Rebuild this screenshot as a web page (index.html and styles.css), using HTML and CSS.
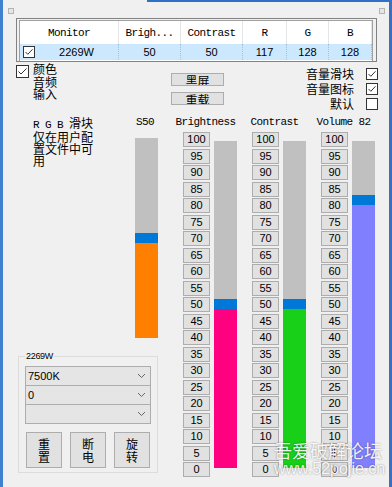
FILE: index.html
```html
<!DOCTYPE html>
<html lang="zh">

<head>
    <meta charset="UTF-8">
    <title>Monitor</title>
    <link rel="stylesheet" href="styles.css">
</head>

<body>
    <div class="window">
        <div class="topbar"></div>
        <div class="corners"><span class="grip"></span><span class="grip"></span></div>

        <div class="listframe">
            <div class="list">
                <div class="list-head">
                    <div>Monitor</div>
                    <div>Brigh...</div>
                    <div>Contrast</div>
                    <div>R</div>
                    <div>G</div>
                    <div>B</div>
                </div>
                <div class="list-row">
                    <div class="cell-name">
                        <svg class="chk" width="12" height="12" viewBox="0 0 12 12"><rect x=".5" y=".5" width="11" height="11" fill="#fff" stroke="#333"/><path d="M2.5 6 L4.8 8.3 L9.5 3.3" fill="none" stroke="#333"/></svg>
                        <span>2269W</span>
                    </div>
                    <div>50</div>
                    <div>50</div>
                    <div>117</div>
                    <div>128</div>
                    <div>128</div>
                </div>
            </div>
        </div>

        <div class="options">
            <div class="opt-left">
                <svg class="chk-big" width="13" height="13" viewBox="0 0 13 13"><rect x=".5" y=".5" width="12" height="12" fill="#fff" stroke="#333"/><path d="M2.5 6.5 L5 9 L10.5 3.5" fill="none" stroke="#333"/></svg>
                <div class="opt-labels">
                    <div>颜色</div>
                    <div>音频</div>
                    <div>输入</div>
                </div>
            </div>
            <div class="opt-mid">
                <button class="small-btn">黑屏</button>
                <button class="small-btn">重载</button>
            </div>
            <div class="opt-right">
                <div class="opt-row"><span>音量滑块</span><svg width="12" height="12" viewBox="0 0 12 12"><rect x=".5" y=".5" width="11" height="11" fill="#fff" stroke="#333"/><path d="M2.5 6 L4.8 8.3 L9.5 3.3" fill="none" stroke="#333"/></svg></div>
                <div class="opt-row"><span>音量图标</span><svg width="12" height="12" viewBox="0 0 12 12"><rect x=".5" y=".5" width="11" height="11" fill="#fff" stroke="#333"/><path d="M2.5 6 L4.8 8.3 L9.5 3.3" fill="none" stroke="#333"/></svg></div>
                <div class="opt-row"><span>默认</span><svg width="12" height="12" viewBox="0 0 12 12"><rect x=".5" y=".5" width="11" height="11" fill="#fff" stroke="#333"/></svg></div>
            </div>
        </div>

        <div class="main">
            <div class="left">
                <div class="left-top">
                    <div class="note"><span class="rgb">R G B </span>滑块<br>仅在用户配置文件中可用</div>
                    <div class="s50">
                        <div class="col-label">S50</div>
                        <div class="bar s50-bar">
                            <div class="rest"></div>
                            <div class="thumb"></div>
                            <div class="fill orange" style="height:95px"></div>
                        </div>
                    </div>
                </div>

                <fieldset class="group">
                    <legend>2269W</legend>
                    <div class="combo"><span>7500K</span><svg width="7" height="4" viewBox="0 0 7 4"><path d="M0 0 L3.5 3.5 L7 0" fill="none" stroke="#666"/></svg></div>
                    <div class="combo"><span>0</span><svg width="7" height="4" viewBox="0 0 7 4"><path d="M0 0 L3.5 3.5 L7 0" fill="none" stroke="#666"/></svg></div>
                    <div class="combo"><span></span><svg width="7" height="4" viewBox="0 0 7 4"><path d="M0 0 L3.5 3.5 L7 0" fill="none" stroke="#666"/></svg></div>
                    <div class="actions">
                        <button class="act">重<br>置</button>
                        <button class="act">断<br>电</button>
                        <button class="act">旋<br>转</button>
                    </div>
                </fieldset>
            </div>

            <div class="slider-col">
                <div class="col-label">Brightness</div>
                <div class="slider">
                    <div class="ticks">
                        <div class="tick">100</div><div class="tick">95</div><div class="tick">90</div>
                        <div class="tick">85</div><div class="tick">80</div><div class="tick">75</div>
                        <div class="tick">70</div><div class="tick">65</div><div class="tick">60</div>
                        <div class="tick">55</div><div class="tick">50</div><div class="tick">45</div>
                        <div class="tick">40</div><div class="tick">35</div><div class="tick">30</div>
                        <div class="tick">25</div><div class="tick">20</div><div class="tick">15</div>
                        <div class="tick">10</div><div class="tick">5</div><div class="tick">0</div>
                    </div>
                    <div class="bar">
                        <div class="rest"></div>
                        <div class="thumb"></div>
                        <div class="fill pink" style="height:159px"></div>
                    </div>
                </div>
            </div>

            <div class="slider-col">
                <div class="col-label">Contrast</div>
                <div class="slider">
                    <div class="ticks">
                        <div class="tick">100</div><div class="tick">95</div><div class="tick">90</div>
                        <div class="tick">85</div><div class="tick">80</div><div class="tick">75</div>
                        <div class="tick">70</div><div class="tick">65</div><div class="tick">60</div>
                        <div class="tick">55</div><div class="tick">50</div><div class="tick">45</div>
                        <div class="tick">40</div><div class="tick">35</div><div class="tick">30</div>
                        <div class="tick">25</div><div class="tick">20</div><div class="tick">15</div>
                        <div class="tick">10</div><div class="tick">5</div><div class="tick">0</div>
                    </div>
                    <div class="bar">
                        <div class="rest"></div>
                        <div class="thumb"></div>
                        <div class="fill green" style="height:159px"></div>
                    </div>
                </div>
            </div>

            <div class="slider-col">
                <div class="col-label">Volume 82</div>
                <div class="slider">
                    <div class="ticks">
                        <div class="tick">100</div><div class="tick">95</div><div class="tick">90</div>
                        <div class="tick">85</div><div class="tick">80</div><div class="tick">75</div>
                        <div class="tick">70</div><div class="tick">65</div><div class="tick">60</div>
                        <div class="tick">55</div><div class="tick">50</div><div class="tick">45</div>
                        <div class="tick">40</div><div class="tick">35</div><div class="tick">30</div>
                        <div class="tick">25</div><div class="tick">20</div><div class="tick">15</div>
                        <div class="tick">10</div><div class="tick">5</div><div class="tick">0</div>
                    </div>
                    <div class="bar">
                        <div class="rest"></div>
                        <div class="thumb"></div>
                        <div class="fill purple" style="height:263px"></div>
                    </div>
                </div>
            </div>
        </div>

        <!-- forum watermark over the bottom right corner -->
        <div class="watermark">
            <div class="wm-cn">吾爱破解论坛</div>
            <div class="wm-url">www.52pojie.cn</div>
        </div>
    </div>
</body>

</html>
```

FILE: styles.css
```css
* {
    margin: 0;
    padding: 0;
    box-sizing: border-box;
}

body {
    background: #f0f0f0;
    font-family: "Noto Sans CJK SC", sans-serif;
    color: #000;
}

.window {
    position: relative;
    width: 392px;
    height: 487px;
    overflow: hidden;
    background: #f0f0f0;
    border-left: 3px solid #3f80d0;
    border-right: 3px solid #3a70c2;
}

.topbar {
    height: 2px;
    margin-left: 144px;
    background: #2f70c8;
}

.corners {
    display: flex;
    justify-content: space-between;
    height: 6px;
    margin-top: 6px;
    padding: 0 4px 0 5px;
}

.grip {
    width: 6px;
    height: 6px;
    border: 1px solid #b4b4b4;
    background: #e6e6e6;
}

/* monitor list */
.listframe {
    width: 361px;
    height: 44px;
    margin: 4px 0 0 13px;
    border: 1px solid #828282;
    padding: 1px 3px 0 2px;
}

.list {
    height: 100%;
    background: #fff;
    border: 1px solid #a0a0a0;
    border-bottom: 0;
}

.list-head,
.list-row {
    display: grid;
    grid-template-columns: 99px 62px 62px 44px 42px 43px;
}

.list-head {
    height: 23px;
    font: 11px "Liberation Mono", monospace;
    letter-spacing: -0.6px;

    div {
        display: flex;
        align-items: center;
        justify-content: center;
        border-right: 1px solid #e5e5e5;
    }
}

.list-row {
    height: 16px;
    background: #cce8ff;
    font: 11px "Liberation Sans", sans-serif;

    > div {
        display: flex;
        align-items: center;
        justify-content: center;
        border-right: 1px dotted #9cc3e6;
    }
}

.cell-name {
    padding-left: 3px;

    span {
        flex: 1;
        text-align: center;
    }
}

/* option checkboxes and small buttons */
.options {
    display: flex;
    height: 48px;
    padding-left: 13px;
    font-size: 12px;
    line-height: 12.5px;
}

.opt-left {
    display: flex;
    align-items: flex-start;
    width: 155px;

    .chk-big {
        margin-top: 3px;
    }
}

.opt-labels {
    margin: 1px 0 0 4px;
}

.opt-mid {
    display: flex;
    flex-direction: column;
    width: 53px;
}

.small-btn {
    height: 13px;
    margin-top: 6px;
    overflow: hidden;
    border: 1px solid #adadad;
    background: #e1e1e1;
    font: 12px/12px "Noto Sans CJK SC", sans-serif;
    padding-top: 1px;
    color: #000;
}

.small-btn:first-child {
    margin-top: 11px;
}

.opt-right {
    margin-left: auto;
    padding: 4px 11px 0 0;
}

.opt-row {
    display: flex;
    align-items: center;
    justify-content: flex-end;
    gap: 12px;
    height: 15px;
    line-height: 12px;
}

/* sliders */
.main {
    display: flex;
    margin-top: 6px;
    padding-left: 13px;
}

.left {
    width: 144px;
    margin-right: 25px;
}

.left-top {
    display: flex;
}

.note {
    width: 61px;
    margin-left: 17px;
    font-size: 12px;
    line-height: 12px;
    padding-top: 1px;
    word-break: break-all;
}

.rgb {
    font-family: "Liberation Mono", monospace;
    font-size: 11px;
    letter-spacing: -0.6px;
    white-space: pre;
}

.s50 {
    margin-left: 41px;

    .col-label {
        padding-left: 1px;
        margin: 0;
    }
}

.col-label {
    height: 12px;
    font: 11px/12px "Liberation Mono", monospace;
    letter-spacing: -0.6px;
    white-space: nowrap;
    margin-right: 9px;
}

.slider-col {
    display: flex;
    flex-direction: column;
    align-items: center;
    width: 54px;
    margin-right: 15px;
}

.slider {
    display: flex;
    gap: 4px;
    margin-top: 4px;
}

.ticks {
    display: flex;
    flex-direction: column;
    justify-content: space-between;
    width: 27px;
    height: 345px;
}

.tick {
    height: 15px;
    border: 1px solid #adadad;
    background: #e1e1e1;
    font: 11px/13px "Liberation Sans", sans-serif;
    text-align: center;
}

.bar {
    display: flex;
    flex-direction: column;
    width: 23px;
    height: 327px;
    margin-top: 9px;
    background: #c0c0c0;
}

.s50-bar {
    height: 200px;
    margin-top: 10px;
}

.rest {
    flex: 1;
}

.thumb {
    height: 10px;
    background: #0078d7;
}

.orange { background: #ff8000; }
.pink { background: #ff0080; }
.green { background: #18d018; }
.purple { background: #8080ff; }

/* group box */
.group {
    width: 140px;
    margin: 12px 0 0 2px;
    border: 1px solid #dcdcdc;
    padding: 4px 6px 4px 6px;

    legend {
        padding: 0 1px;
        font: 9px/12px "Liberation Sans", sans-serif;
        letter-spacing: -0.3px;
    }
}

.combo {
    display: flex;
    align-items: center;
    justify-content: space-between;
    height: 20px;
    padding: 0 5px 0 2px;
    border: 1px solid #adadad;
    background: #e5e5e5;
    font: 11px "Liberation Sans", sans-serif;
}

.combo + .combo {
    margin-top: -1px;
}

.actions {
    display: flex;
    gap: 8px;
    margin-top: 8px;
    padding-left: 1px;
}

.act {
    width: 36px;
    height: 36px;
    border: 1px solid #adadad;
    background: #e1e1e1;
    font: 12px/13px "Noto Sans CJK SC", sans-serif;
    color: #000;
}

.watermark {
    position: absolute;
    left: 271px;
    top: 440px;
    color: rgba(255, 255, 255, 0.92);
    text-shadow: 0 0 2px rgba(0, 0, 0, 0.45);
}

.wm-cn {
    font: 18px/20px "Noto Sans CJK SC", sans-serif;
}

.wm-url {
    font: 16px/18px "Liberation Sans", sans-serif;
}
```
